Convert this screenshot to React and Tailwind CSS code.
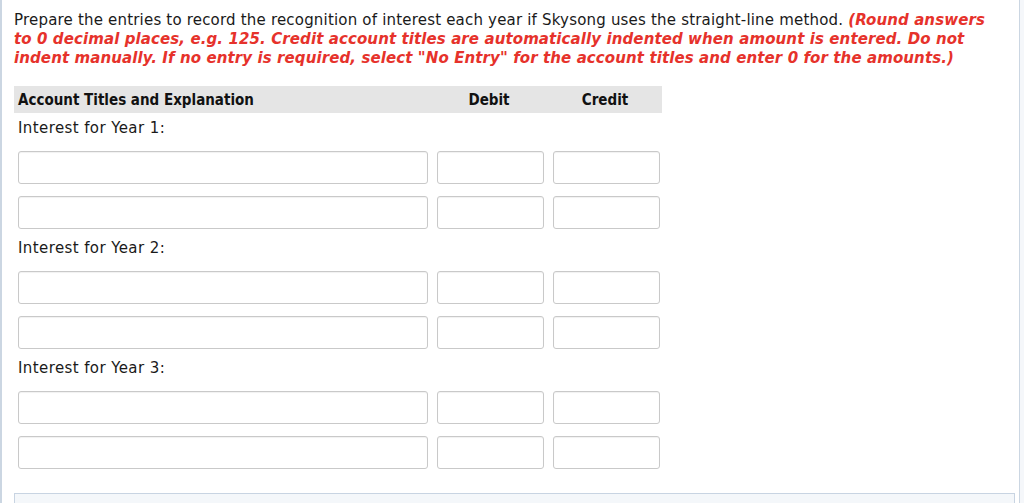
export default function App() {
  const groups = ["Interest for Year 1:", "Interest for Year 2:", "Interest for Year 3:"];

  const inputRow = (key, first) => (
    <div key={key} className={`flex gap-[9px] ${first ? "mt-[13px]" : "mt-[12px]"}`}>
      <input className="w-[410px] h-[33px] rounded-[3px] border border-[#c9c9c9] bg-white shadow-[inset_0_1px_1px_rgba(0,0,0,0.06)]" />
      <input className="w-[107px] h-[33px] rounded-[3px] border border-[#c9c9c9] bg-white shadow-[inset_0_1px_1px_rgba(0,0,0,0.06)]" />
      <input className="w-[107px] h-[33px] rounded-[3px] border border-[#c9c9c9] bg-white shadow-[inset_0_1px_1px_rgba(0,0,0,0.06)]" />
    </div>
  );

  return (
    <div className="w-[1024px] h-[503px] overflow-hidden bg-[#f5f7fa]">
      <div className="w-[1020px] h-[503px] bg-white border-l-2 border-r border-[#cbd6e2] pl-[12px] pr-[4px] pt-[11px] font-['DejaVu_Sans',sans-serif] text-[#1a1a1a]">
        <p className="w-[985px] text-[15px] leading-[19px] tracking-[0.19px]">
          Prepare the entries to record the recognition of interest each year if Skysong uses the straight-line method.{" "}
          <span className="text-[#e6322b] font-bold italic tracking-[0.1px]">
            (Round answers to 0 decimal places, e.g. 125. Credit account titles are automatically indented when amount is entered. Do not indent manually. If no entry is required, select "No Entry" for the account titles and enter 0 for the amounts.)
          </span>
        </p>

        <div className="mt-[18px] w-[648px] h-[27px] pt-[1px] bg-[#e5e5e5] flex items-center text-[15px] font-bold font-['DejaVu_Sans_Condensed','DejaVu_Sans',sans-serif] font-stretch-condensed text-[#111]">
          <div className="w-[416px] pl-[4px]">Account Titles and Explanation</div>
          <div className="w-[118px] text-center">Debit</div>
          <div className="w-[114px] text-center">Credit</div>
        </div>

        <div className="pl-[4px]">
          {groups.map((g, i) => (
            <div key={g}>
              <div className={`${i === 0 ? "mt-[5px]" : "mt-[9px]"} h-[20px] leading-[20px] text-[15px] tracking-[0.4px] text-[#1a1a1a]`}>
                {g}
              </div>
              {inputRow(g + "a", true)}
              {inputRow(g + "b", false)}
            </div>
          ))}
        </div>

        <div className="mt-[24px] w-[1001px] h-[40px] border border-[#c8d4e2] bg-[#f4f7fa]" />
      </div>
    </div>
  );
}
